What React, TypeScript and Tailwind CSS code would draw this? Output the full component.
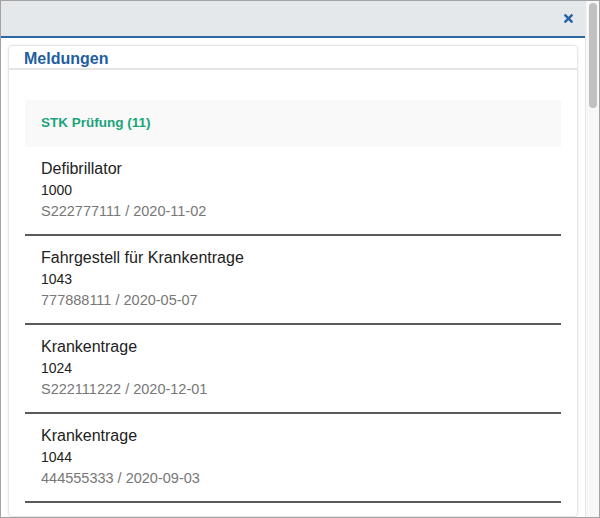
import { FaTimes } from "react-icons/fa";

const items = [
  { name: "Defibrillator", nr: "1000", info: "S222777111 / 2020-11-02" },
  { name: "Fahrgestell für Krankentrage", nr: "1043", info: "777888111 / 2020-05-07" },
  { name: "Krankentrage", nr: "1024", info: "S222111222 / 2020-12-01" },
  { name: "Krankentrage", nr: "1044", info: "444555333 / 2020-09-03" },
];

export default function App() {
  return (
    <div
      className="w-[600px] h-[518px] flex border border-[#a3a3a3] bg-white overflow-hidden"
      style={{ fontFamily: '"Liberation Sans", Arial, sans-serif' }}
    >
      <div className="flex-1 min-w-0 flex flex-col overflow-hidden">
        <div className="h-[37px] shrink-0 bg-[#e5e8ea] border-b-2 border-[#2a67a3] flex items-center justify-end pr-[10px]">
          <FaTimes className="text-[#2563a5] text-[13px]" />
        </div>
        <div className="flex-1 px-[7px] pt-[7px] overflow-hidden">
          <div className="rounded-[4px] border border-[#e6e6e6] shadow-[0_0_3px_rgba(0,0,0,0.08)] h-full">
            <div className="h-[24px] border-b-2 border-[#e4e4e4] pl-[15px] flex items-center">
              <h2 className="text-[16px] font-bold text-[#1f5e9f] leading-none pt-[4px]">Meldungen</h2>
            </div>
            <div className="px-[16px] pt-[30px]">
              <div className="h-[47px] bg-[#f9f9f9] flex items-center px-[16px]">
                <span className="text-[13.5px] font-bold text-[#1aa47b]">STK Prüfung (11)</span>
              </div>
              {items.map((item, i) => (
                <div key={i} className="px-[16px] pt-[11px] pb-[12px] border-b-2 border-[#5a5a5a]">
                  <div className="text-[16px] leading-[22px] text-[#222]">{item.name}</div>
                  <div className="text-[14px] leading-[21px] text-[#222]">{item.nr}</div>
                  <div className="text-[14.5px] leading-[21px] text-[#777]">{item.info}</div>
                </div>
              ))}
            </div>
          </div>
        </div>
      </div>
      <div className="w-[14px] shrink-0 bg-[#f7f7f7] border-l border-[#e6e6e6] pt-[2px] flex justify-center">
        <div className="w-[8px] h-[105px] rounded-full bg-[#c1c1c1]" />
      </div>
    </div>
  );
}
